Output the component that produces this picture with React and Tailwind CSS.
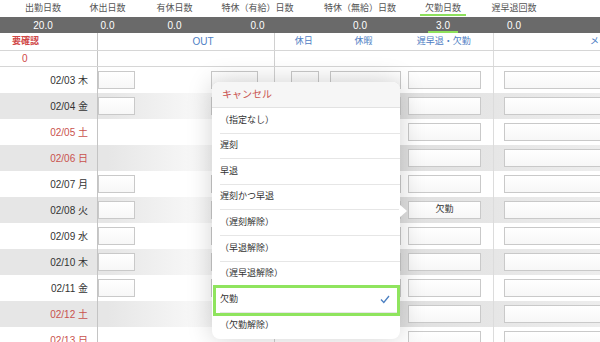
import React from 'react';

const FONT = { fontFamily: '"Liberation Sans", "Noto Sans CJK JP", sans-serif' };

const summary = [
  { label: '出勤日数', value: '20.0', w: 'w-[86px]' },
  { label: '休出日数', value: '0.0', w: 'w-[43px]' },
  { label: '有休日数', value: '0.0', w: 'w-[91px]' },
  { label: '特休（有給）日数', value: '0.0', w: 'w-[75px]' },
  { label: '特休（無給）日数', value: '0.0', w: 'w-[130px]' },
  { label: '欠勤日数', value: '3.0', w: 'w-[36px]', mark: true },
  { label: '遅早退回数', value: '0.0', w: 'w-[106px]' },
];

const days = [
  ['02/03', '木'],
  ['02/04', '金'],
  ['02/05', '土'],
  ['02/06', '日'],
  ['02/07', '月'],
  ['02/08', '火'],
  ['02/09', '水'],
  ['02/10', '木'],
  ['02/11', '金'],
  ['02/12', '土'],
  ['02/13', '日'],
];

const options = [
  '（指定なし）',
  '遅刻',
  '早退',
  '遅刻かつ早退',
  '（遅刻解除）',
  '（早退解除）',
  '（遅早退解除）',
  '欠勤',
  '（欠勤解除）',
];

function Box({ className = '', children }) {
  return (
    <div
      className={`h-[18px] shrink-0 border border-[#c9c9c9] bg-[linear-gradient(180deg,#ffffff,#f7f7f7)] flex items-center justify-center text-[9px] text-[#333] ${className}`}
    >
      {children}
    </div>
  );
}

export default function App() {
  return (
    <div
      className="relative w-[600px] h-[342px] overflow-hidden bg-white"
      style={FONT}
    >
      {/* summary labels */}
      <div className="flex h-[17px] items-center text-[9px] text-[#555] whitespace-nowrap">
        {summary.map((s) => (
          <div key={s.label} className={`${s.w} shrink-0 flex justify-center`}>
            <span
              className={
                s.mark
                  ? 'px-[5px] pt-[2px] border-b-2 border-[#8de05c] leading-[11px]'
                  : ''
              }
            >
              {s.label}
            </span>
          </div>
        ))}
      </div>

      {/* summary values */}
      <div className="flex h-[16px] items-center bg-[#6a6a6a] text-[10px] text-white whitespace-nowrap">
        {summary.map((s) => (
          <div key={s.label} className={`${s.w} shrink-0 flex justify-center`}>
            <span
              className={
                s.mark
                  ? 'px-[8px] pt-[2px] border-b-2 border-[#8de05c] leading-[11px]'
                  : ''
              }
            >
              {s.value}
            </span>
          </div>
        ))}
      </div>

      {/* table header */}
      <div className="flex h-[18px] border-b border-[#d6d6d6] text-[9px] text-[#4f80c4] whitespace-nowrap">
        <div className="w-[98px] shrink-0 border-r border-[#c4c4c4] flex items-center pl-[12px] text-[#d04848] font-bold">
          要確認
        </div>
        <div className="w-[177px] shrink-0 border-r border-[#d0d0d0] flex items-center justify-center pl-[34px] text-[10px]">
          OUT
        </div>
        <div className="w-[219px] shrink-0 border-r border-[#dcdcdc] flex items-center">
          <div className="w-[58px] flex justify-center">休日</div>
          <div className="w-[62px] flex justify-center">休暇</div>
          <div className="w-[99px] flex justify-center">遅早退・欠勤</div>
        </div>
        <div className="flex-1 flex items-center pl-[96px]">メモ</div>
      </div>

      {/* count row */}
      <div className="flex h-[16px] border-b border-[#d6d6d6] text-[10px] text-[#d04848]">
        <div className="w-[98px] shrink-0 border-r border-[#c4c4c4] flex items-center pl-[22px]">
          0
        </div>
        <div className="w-[177px] shrink-0 border-r border-[#d0d0d0]" />
        <div className="w-[219px] shrink-0 border-r border-[#dcdcdc]" />
        <div className="flex-1" />
      </div>

      {/* day rows */}
      {days.map(([date, wd], i) => {
        const weekend = wd === '土' || wd === '日';
        const gray = i % 2 === 1;
        return (
          <div
            key={date}
            className={`flex h-[26px] ${
              gray
                ? 'bg-[linear-gradient(90deg,#e6e6e6_0%,#e6e6e6_18%,#f7f7f7_32%,#f1f1f1_42%,#d9d9d9_52%,#e1e1e1_70%,#ededed_100%)]'
                : 'bg-white'
            }`}
          >
            <div
              className={`w-[98px] shrink-0 border-r border-[#c4c4c4] flex items-center justify-end pr-[9px] text-[10px] whitespace-nowrap ${
                weekend ? 'text-[#c9524e]' : 'text-[#333]'
              }`}
            >
              {date} {wd}
            </div>
            <div className="w-[177px] shrink-0 border-r border-[#d0d0d0] flex items-center">
              <Box className={`w-[37px] ${weekend ? 'invisible' : ''}`} />
              <Box className={`ml-[76px] w-[47px] ${weekend ? 'invisible' : ''}`} />
            </div>
            <div className="w-[219px] shrink-0 border-r border-[#dcdcdc] flex items-center">
              <Box className={`ml-[16px] w-[28px] ${weekend ? 'invisible' : ''}`} />
              <Box className={`ml-[11px] w-[71px] ${weekend ? 'invisible' : ''}`} />
              <Box className="ml-[7px] w-[73px]">{date === '02/08' ? '欠勤' : null}</Box>
            </div>
            <div className="flex-1 flex items-center">
              <Box className="ml-[10px] w-[110px]" />
            </div>
          </div>
        );
      })}

      {/* popover */}
      <div className="absolute left-[212px] top-[82px] w-[188px] h-[257px] rounded-lg bg-white shadow-[0_0_26px_rgba(0,0,0,0.18)]">
        <div className="h-[26px] rounded-t-lg bg-[#f6f6f6] border-b border-[#e2e2e2] flex items-center pl-[10px] text-[10px] text-[#c9524e]">
          キャンセル
        </div>
        {options.map((o, i) => (
          <div key={o} className="relative h-[25.6px] pl-[8px]">
            <div
              className={`h-full flex items-center pr-[10px] text-[9px] text-[#333] ${
                i < options.length - 1 ? 'border-b border-[#e6e6e6]' : ''
              }`}
            >
              <span className="flex-1">{o}</span>
              {o === '欠勤' && (
                <svg width="10" height="9" viewBox="0 0 10 9">
                  <polyline
                    points="1,4.5 3.8,7.5 9,1"
                    fill="none"
                    stroke="#4a7fc1"
                    strokeWidth="1.3"
                  />
                </svg>
              )}
            </div>
            {o === '欠勤' && (
              <div className="absolute left-[1px] right-0 -top-[2px] -bottom-[3px] border-[3px] border-[#8fe45e]" />
            )}
          </div>
        ))}
        {/* arrow */}
        <div className="absolute left-[187px] top-[122px] w-0 h-0 border-y-[7px] border-y-transparent border-l-[8px] border-l-white" />
      </div>
    </div>
  );
}
